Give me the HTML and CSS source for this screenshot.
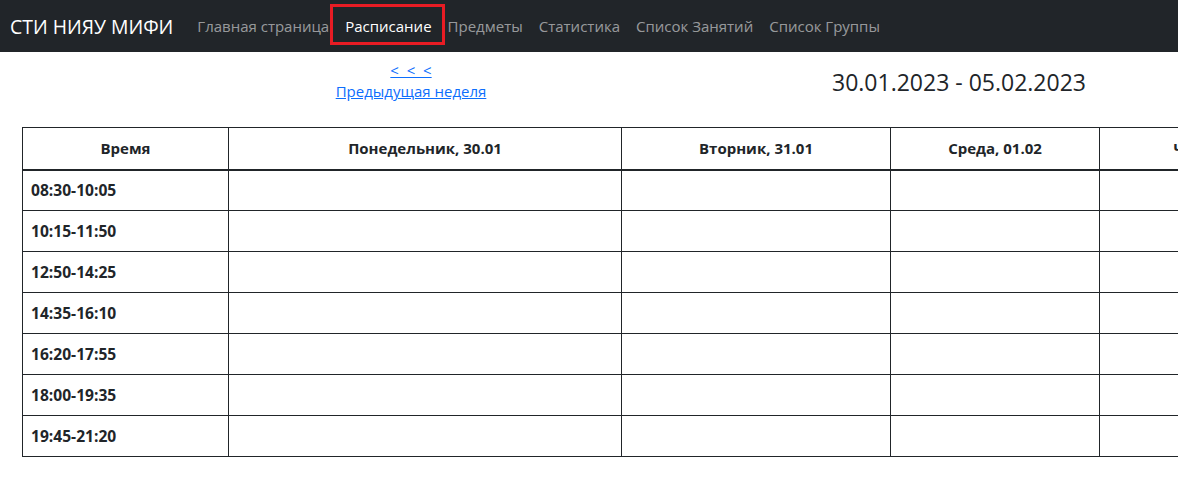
FILE: index.html
```html
<!DOCTYPE html>
<html lang="ru">
<head>
<meta charset="utf-8">
<title>Расписание</title>
<link rel="stylesheet" href="styles.css">
</head>
<body>
<nav class="navbar">
  <a class="brand" href="#">СТИ НИЯУ МИФИ</a>
  <ul class="nav">
    <li><a class="nav-link" href="#">Главная страница</a></li>
    <li><a class="nav-link active" href="#">Расписание</a></li>
    <li><a class="nav-link" href="#">Предметы</a></li>
    <li><a class="nav-link" href="#">Статистика</a></li>
    <li><a class="nav-link" href="#">Список Занятий</a></li>
    <li><a class="nav-link" href="#">Список Группы</a></li>
  </ul>
</nav>
<main class="page">
  <div class="week-bar">
    <div class="prev">
      <a href="#" class="arrows">&lt;&nbsp; &lt;&nbsp; &lt;</a>
      <a href="#" class="prev-text">Предыдущая неделя</a>
    </div>
    <div class="range">30.01.2023 - 05.02.2023</div>
  </div>
  <table class="schedule">
    <colgroup>
      <col class="c-time"><col class="c-mon"><col class="c-tue"><col class="c-wed"><col class="c-thu">
    </colgroup>
    <thead>
      <tr><th>Время</th><th>Понедельник, 30.01</th><th>Вторник, 31.01</th><th>Среда, 01.02</th><th>Четверг, 02.02</th></tr>
    </thead>
    <tbody>
      <tr><td class="time">08:30-10:05</td><td></td><td></td><td></td><td></td></tr>
      <tr><td class="time">10:15-11:50</td><td></td><td></td><td></td><td></td></tr>
      <tr><td class="time">12:50-14:25</td><td></td><td></td><td></td><td></td></tr>
      <tr><td class="time">14:35-16:10</td><td></td><td></td><td></td><td></td></tr>
      <tr><td class="time">16:20-17:55</td><td></td><td></td><td></td><td></td></tr>
      <tr><td class="time">18:00-19:35</td><td></td><td></td><td></td><td></td></tr>
      <tr><td class="time">19:45-21:20</td><td></td><td></td><td></td><td></td></tr>
    </tbody>
  </table>
</main>
</body>
</html>
```
FILE: styles.css
```css
* { box-sizing: border-box; }
html, body { margin: 0; padding: 0; overflow: hidden; }
body {
  font-family: "Open Sans", "Noto Sans", sans-serif;
  font-size: 15px;
  color: #212529;
  background: #fff;
}
.navbar {
  background: #212529;
  height: 52px;
  display: flex;
  align-items: center;
  padding: 0 10px;
}
.brand {
  color: #fff;
  text-decoration: none;
  font-size: 19.4px;
  margin-right: 16px;
}
.nav {
  list-style: none;
  margin: 0;
  padding: 0;
  display: flex;
  align-items: center;
}
.nav-link {
  display: block;
  color: rgba(255,255,255,0.55);
  text-decoration: none;
  padding: 8px 8px;
}
.nav-link.active {
  color: #fff;
  position: relative;
}
.nav-link.active::after {
  content: "";
  position: absolute;
  left: -7px;
  right: -5px;
  top: -4px;
  bottom: -1px;
  border: 3px solid #e81c24;
}
.page {
  padding: 8px 0 0 22px;
}
.week-bar {
  display: flex;
  align-items: flex-start;
  height: 67px;
}
.prev {
  width: 778px;
  display: flex;
  flex-direction: column;
  align-items: center;
  gap: 1px;
}
.prev a { color: #0d6efd; text-decoration: underline; font-size: 15px; }
.range {
  font-size: 23px;
  margin-top: 6px;
  padding-left: 32px;
}
.schedule {
  border-collapse: collapse;
  table-layout: fixed;
  width: 1335px;
}
.c-time { width: 206px; }
.c-mon { width: 393px; }
.c-tue { width: 269px; }
.c-wed { width: 209px; }
.c-thu { width: 258px; }
.schedule th, .schedule td {
  border: 1px solid #212529;
  padding: 8px;
  height: 41px;
  font-size: 15px;
}
.schedule th {
  text-align: center;
  font-weight: 700;
  height: 42px;
  border-bottom: 2px solid #212529;
}
.schedule td.time { font-weight: 700; text-align: left; font-size: 15.6px; }
```
